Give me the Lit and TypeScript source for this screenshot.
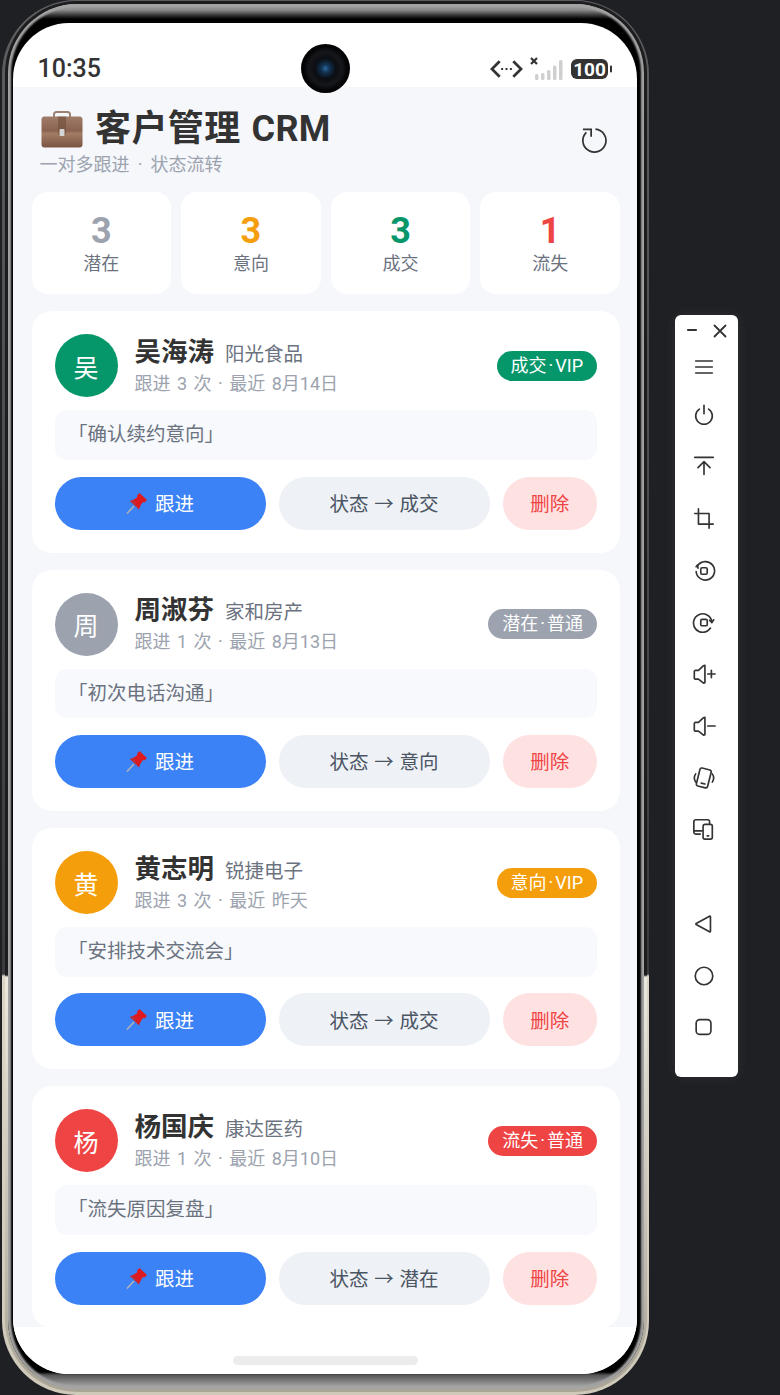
import { LitElement, html, css, svg } from "lit";
import { customElement } from "lit/decorators.js";

type Customer = {
  name: string;
  company: string;
  count: number;
  last: string;
  note: string;
  state: string;
  level: string;
  color: string;
  next: string;
};

const customers: Customer[] = [
  { name: "吴海涛", company: "阳光食品", count: 3, last: "8月14日", note: "「确认续约意向」", state: "成交", level: "VIP", color: "#059669", next: "成交" },
  { name: "周淑芬", company: "家和房产", count: 1, last: "8月13日", note: "「初次电话沟通」", state: "潜在", level: "普通", color: "#9ca3af", next: "意向" },
  { name: "黄志明", company: "锐捷电子", count: 3, last: "昨天", note: "「安排技术交流会」", state: "意向", level: "VIP", color: "#f59e0b", next: "成交" },
  { name: "杨国庆", company: "康达医药", count: 1, last: "8月10日", note: "「流失原因复盘」", state: "流失", level: "普通", color: "#ef4444", next: "潜在" },
];

const stats = [
  { value: 3, label: "潜在", color: "#9ca3af" },
  { value: 3, label: "意向", color: "#f59e0b" },
  { value: 3, label: "成交", color: "#059669" },
  { value: 1, label: "流失", color: "#ef4444" },
];

// side toolbar icons, all on a 26 box
const toolIcons = [
  svg`<path d="M4 6.500h18M4 13h18M4 19.500h18"/>`,
  svg`<path d="M13 1.500v9"/><path d="M8 5.500a9 9 0 1 0 10 0"/>`,
  svg`<path d="M3 1.500h20M13 20V6M6.500 12.500 13 6l6.500 6.500"/>`,
  svg`<path d="M7 2v16.500h16M3 7h15.500v16"/>`,
  svg`<rect x="9.500" y="9.500" width="7" height="7" rx="1.500"/><path d="M6 7.500a10 10 0 1 1-1.500 6"/><path d="M4.500 8.500 6 6.500l.5 3.500" />`,
  svg`<rect x="9.500" y="9" width="7" height="7" rx="1.500"/><path d="M20 18.500a10 10 0 1 1 1.500-7"/><path d="M19 10l2.500 2.500 2-3"/>`,
  svg`<path d="M14 3.500v19l-1.500.5L7 18.500H3.500a1 1 0 0 1-1-1V10l1-1H7l5.500-5z"/><path d="M17 13h8M21 9v8"/>`,
  svg`<path d="M14 3.500v19l-1.500.5L7 18.500H3.500a1 1 0 0 1-1-1V10l1-1H7l5.500-5z"/><path d="M17 13h8"/>`,
  svg`<rect x="6.500" y="3" width="12.500" height="20" rx="2" transform="rotate(14 13 13)"/><path d="M10 18.500l4 1"/><path d="M4 8.500c-2 3-2 6 0 9M22 8.500c2 3 2 6 0 9"/>`,
  svg`<path d="M9 18.500H4a2 2 0 0 1-2-2V5a2 2 0 0 1 2-2h13a2 2 0 0 1 2 2v2"/><path d="M2 15h9"/><rect x="12" y="8" width="10" height="16" rx="2"/><path d="M16.500 20.500h1.500"/>`,
];

const navIcons = [
  svg`<path d="M4.500 12.500 19 4.500a.8.8 0 0 1 1 .7v15.600a.8.8 0 0 1-1 .7L4.500 13.500a.6.6 0 0 1 0-1z"/>`,
  svg`<circle cx="13" cy="13" r="9.500"/>`,
  svg`<rect x="4.500" y="5" width="16" height="16" rx="4"/>`,
];

@customElement("app-root")
export class AppRoot extends LitElement {
  static styles = css`
    :host {
      display: flex;
      align-items: flex-start;
      width: 780px;
      height: 1395px;
      overflow: hidden;
      background: #1e2024;
      font-family: Roboto, "Noto Sans CJK SC", sans-serif;
    }

    .phone {
      box-sizing: border-box;
      flex: none;
      width: 647px;
      height: 1395px;
      margin-left: 2px;
      padding: 1px 2.500px 3px;
      border-radius: 74px;
      background: linear-gradient(#5d5e60 0, #3a3b3d 974px, #d9d4c6 976px, #cfc9b9 100%);
    }

    .band {
      box-sizing: border-box;
      height: 100%;
      padding: 3px;
      border-radius: 72px;
      background: linear-gradient(#1d1d1f 0, #1d1d1f 974px, #ece8dc 976px, #a9a496 100%);
    }

    .bezel {
      box-sizing: border-box;
      height: 100%;
      padding: 19px 6.500px 15px 5px;
      border-radius: 69px;
      background: linear-gradient(#a8a8a8 0, #8a8a8a 6px, #2a2a2a 12px, #000 15px, #000 1368px, #555 1371px, #b4b4b4 1385px);
      box-shadow: inset 0 0 2px 3px #a4a4a4;
    }

    .screen {
      position: relative;
      display: flex;
      flex-direction: column;
      height: 100%;
      overflow: hidden;
      border-radius: 56px;
      background: #fff;
    }

    .status {
      flex: none;
      display: flex;
      align-items: center;
      justify-content: space-between;
      box-sizing: border-box;
      height: 64px;
      padding: 28px 24px 0 25px;
      color: #333;
    }

    .time {
      font-size: 25px;
      font-weight: 500;
      line-height: 36px;
    }

    .status-icons {
      display: flex;
      align-items: center;
    }

    .camera {
      position: absolute;
      top: 21px;
      left: 288px;
      width: 49px;
      height: 49px;
      border-radius: 50%;
      background: radial-gradient(circle at 50% 50%, #2a689f 0, #123252 12%, #0b0d12 30%, #16171b 48%, #050507 62%, #000 100%);
    }

    .content {
      flex: 1;
      min-height: 0;
      overflow: hidden;
      padding: 0 17px 0 19px;
      background: #f5f7fb;
    }

    .head {
      display: flex;
      justify-content: space-between;
      padding: 19px 13px 0 8px;
    }

    .title {
      display: flex;
      align-items: center;
      gap: 12.500px;
      font-size: 36px;
      line-height: 46px;
      font-weight: 700;
      letter-spacing: 0.400px;
      word-spacing: 1.500px;
      color: #333;
    }

    .title svg {
      margin-left: 1px;
    }

    .subtitle {
      margin-top: 1px;
      font-size: 18px;
      line-height: 24px;
      word-spacing: 3.700px;
      color: #9ca3af;
    }

    .refresh {
      margin-top: 22px;
    }

    .stats {
      display: grid;
      grid-template-columns: repeat(4, 1fr);
      gap: 10px;
      margin-top: 15px;
    }

    .stat {
      display: flex;
      flex-direction: column;
      align-items: center;
      height: 102px;
      box-sizing: border-box;
      padding-top: 18px;
      border-radius: 16px;
      background: #fff;
    }

    .stat b {
      font-size: 36px;
      line-height: 42px;
      font-weight: 700;
    }

    .stat span {
      font-size: 18px;
      line-height: 24px;
      color: #6b7280;
    }

    .list {
      display: flex;
      flex-direction: column;
      gap: 17px;
      margin-top: 17.300px;
    }

    .card {
      flex: none;
      box-sizing: border-box;
      height: 241.400px;
      padding: 23px;
      border-radius: 20px;
      background: #fff;
    }

    .row {
      display: flex;
      align-items: center;
      height: 63px;
    }

    .avatar {
      flex: none;
      display: flex;
      align-items: center;
      justify-content: center;
      width: 63px;
      height: 63px;
      margin-right: 17px;
      border-radius: 50%;
      color: #fff;
      font-size: 25px;
    }

    .info {
      flex: 1;
      padding-top: 1px;
    }

    .line {
      display: flex;
      align-items: baseline;
      gap: 11px;
      line-height: 32px;
    }

    .name {
      font-size: 26.500px;
      font-weight: 700;
      color: #333;
    }

    .company {
      font-size: 19.500px;
      color: #6b7280;
    }

    .meta {
      font-size: 18px;
      line-height: 26px;
      word-spacing: 2px;
      color: #9ca3af;
    }

    .badge {
      padding: 0 14px;
      border-radius: 15px;
      color: #fff;
      font-size: 18px;
      line-height: 30px;
    }

    .badge i {
      margin: 0 2px;
      font-style: normal;
    }

    .note {
      box-sizing: border-box;
      height: 49.500px;
      margin-top: 13px;
      padding: 0 13.500px;
      border-radius: 12px;
      background: #f7f9fc;
      color: #6b7280;
      font-size: 19.500px;
      line-height: 49px;
    }

    .actions {
      display: flex;
      gap: 13px;
      margin-top: 16.800px;
    }

    .btn {
      display: flex;
      align-items: center;
      justify-content: center;
      gap: 7px;
      box-sizing: border-box;
      height: 53px;
      padding-bottom: 1px;
      border-radius: 26.500px;
      font-size: 19.500px;
    }

    .follow {
      flex: none;
      width: 211px;
      background: #3b82f6;
      color: #fff;
    }

    .next {
      flex: none;
      width: 211px;
      background: #eef1f6;
      color: #4b5563;
      word-spacing: 1px;
    }

    .del {
      flex: 1;
      background: #fee2e2;
      color: #ef4444;
    }

    .nav {
      flex: none;
      display: flex;
      justify-content: center;
      height: 47px;
      box-sizing: border-box;
      padding: 29px 0 0 2px;
      background: #fff;
    }

    .handle {
      width: 185px;
      height: 9px;
      border-radius: 5px;
      background: #ececec;
    }

    .tools {
      flex: none;
      display: flex;
      flex-direction: column;
      align-items: center;
      box-sizing: border-box;
      width: 63px;
      height: 762px;
      margin: 315px 0 0 26px;
      border-radius: 6px;
      background: #fff;
      box-shadow: 0 0 14px rgba(255, 255, 255, 0.07);
    }

    .win {
      display: flex;
      justify-content: space-between;
      box-sizing: border-box;
      width: 100%;
      padding: 9px 11px 0 11px;
      height: 28px;
    }

    .win svg:first-child {
      stroke-width: 2.200;
    }

    .tool {
      display: flex;
      align-items: center;
      justify-content: center;
      height: 51.700px;
      padding-right: 5px;
    }

    .tool.first {
      height: 47px;
    }

    .tool svg,
    .win svg {
      fill: none;
      stroke: #333;
      stroke-width: 1.800;
      stroke-linecap: round;
      stroke-linejoin: round;
    }

    .spacer {
      height: 43px;
      flex: none;
    }
  `;

  briefcase() {
    return html`<svg width="42" height="38" viewBox="0 0 42 38">
      <defs>
        <linearGradient id="case" x1="0" y1="0" x2="0" y2="1">
          <stop offset="0" stop-color="#a07d68" />
          <stop offset="0.45" stop-color="#8a6350" />
          <stop offset="0.55" stop-color="#a27c64" />
          <stop offset="1" stop-color="#7a5442" />
        </linearGradient>
      </defs>
      <path d="M13 8V4.500a2.500 2.500 0 0 1 2.500-2.500h11a2.500 2.500 0 0 1 2.500 2.500V8" fill="none" stroke="#9b8272" stroke-width="2" />
      <rect x="0.500" y="6.500" width="41" height="31" rx="3" fill="url(#case)" />
      <rect x="17" y="6.500" width="8" height="18" fill="#6e4c3b" opacity="0.6" />
      <rect x="18.500" y="19" width="5" height="7" rx="1" fill="#d5d5d5" />
    </svg>`;
  }

  pin() {
    return html`<svg width="22" height="22" viewBox="0 0 22 22">
      <path d="M1 21.500 8 14" stroke="#b4b4b4" stroke-width="1.500" fill="none" />
      <path d="M4 9c3-1 5-2 7.500-4L11 3.500 13.500 1l7.500 7-2.500 2.500-1.500-.5c-2 2.500-3 4.500-4 7.500z" fill="#dc1a20" />
      <path d="M4 9c1.500-.5 3-1 4 0s2 4 5 8z" fill="#b8323a" />
    </svg>`;
  }

  statusIcons() {
    return html`<div class="status-icons">
      <svg width="33" height="22" viewBox="0 0 34 22" fill="none" stroke="#333" stroke-width="2.800">
        <path d="M10 3 2 11l8 8M24 3l8 8-8 8" />
        <path d="M11.500 11h2M16 11h2M20.500 11h2" stroke-width="2.200" />
      </svg>
      <svg style="margin-left:7px" width="34" height="24" viewBox="0 0 34 24">
        <path d="M1 1l6 6M7 1 1 7" stroke="#333" stroke-width="2.200" fill="none" />
        <g fill="#cfcfcf">
          <rect x="5" y="17" width="3.500" height="6" rx="1.500" />
          <rect x="11" y="16" width="3.500" height="7" rx="1.500" />
          <rect x="17" y="13" width="3.500" height="10" rx="1.500" />
          <rect x="23" y="8.500" width="3.500" height="14.500" rx="1.500" />
          <rect x="29" y="3" width="3.500" height="20" rx="1.500" />
        </g>
      </svg>
      <svg style="margin-left:7px" width="42" height="22" viewBox="0 0 42 22">
        <rect x="0" y="1" width="37" height="20" rx="6" fill="#333" />
        <rect x="39" y="7.500" width="2" height="7" rx="1" fill="#333" />
        <text x="18.500" y="17.500" text-anchor="middle" font-size="19" font-weight="700" fill="#fff" font-family="Roboto, sans-serif">100</text>
      </svg>
    </div>`;
  }

  card(c: Customer) {
    return html`<div class="card">
      <div class="row">
        <div class="avatar" style="background:${c.color}">${c.name[0]}</div>
        <div class="info">
          <div class="line">
            <span class="name">${c.name}</span>
            <span class="company">${c.company}</span>
          </div>
          <div class="meta">跟进 ${c.count} 次 · 最近 ${c.last}</div>
        </div>
        <div class="badge" style="background:${c.color}">${c.state}<i>·</i>${c.level}</div>
      </div>
      <div class="note">${c.note}</div>
      <div class="actions">
        <div class="btn follow">${this.pin()}跟进</div>
        <div class="btn next">状态 → ${c.next}</div>
        <div class="btn del">删除</div>
      </div>
    </div>`;
  }

  render() {
    return html`
      <div class="phone">
        <div class="band">
          <div class="bezel">
            <div class="screen">
              <div class="status">
                <span class="time">10:35</span>
                ${this.statusIcons()}
              </div>
              <div class="camera"></div>
              <div class="content">
                <div class="head">
                  <div>
                    <div class="title">${this.briefcase()}客户管理 CRM</div>
                    <div class="subtitle">一对多跟进 · 状态流转</div>
                  </div>
                  <svg class="refresh" width="25" height="25" viewBox="0 0 26 26" fill="none" stroke="#333" stroke-width="1.800">
                    <path d="M14 1.100A12 12 0 1 1 4.500 4.500" />
                    <path d="M1 1.500h8.500V9" />
                  </svg>
                </div>
                <div class="stats">
                  ${stats.map(
                    (s) => html`<div class="stat">
                      <b style="color:${s.color}">${s.value}</b>
                      <span>${s.label}</span>
                    </div>`
                  )}
                </div>
                <div class="list">${customers.map((c) => this.card(c))}</div>
              </div>
              <div class="nav"><div class="handle"></div></div>
            </div>
          </div>
        </div>
      </div>
      <div class="tools">
        <div class="win">
          <svg width="12" height="12" viewBox="0 0 12 12"><path d="M2 6h8" /></svg>
          <svg width="14" height="14" viewBox="0 0 14 14"><path d="M1.500 1.500l11 11M12.500 1.500l-11 11" /></svg>
        </div>
        ${toolIcons.map(
          (i, n) => html`<div class="tool ${n === 0 ? "first" : ""}"><svg width="24" height="24" viewBox="0 0 26 26">${i}</svg></div>`
        )}
        <div class="spacer"></div>
        ${navIcons.map(
          (i) => html`<div class="tool"><svg width="24" height="24" viewBox="0 0 26 26">${i}</svg></div>`
        )}
      </div>
    `;
  }
}
